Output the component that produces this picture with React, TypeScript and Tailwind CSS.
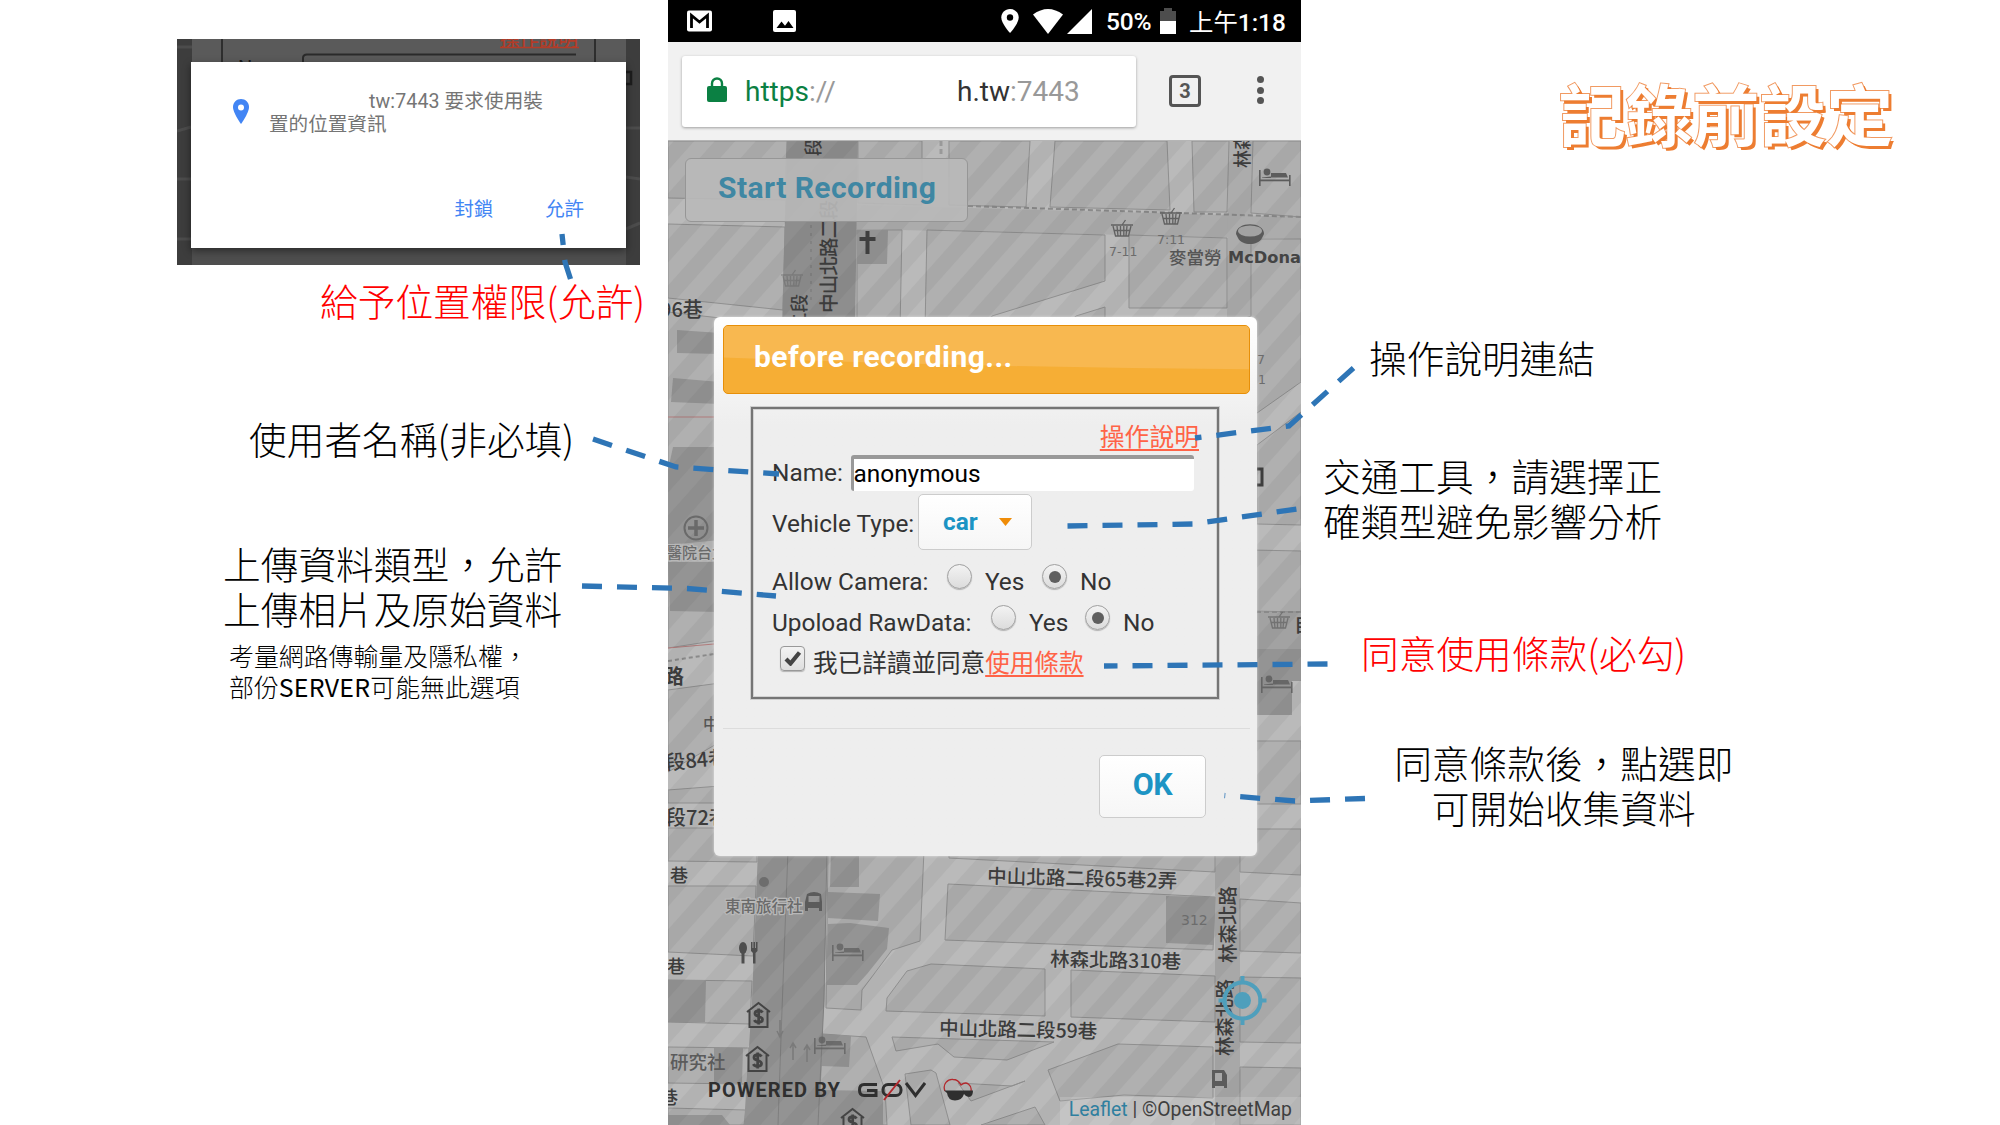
import React from 'react';

const CJK = "font-['Noto_Sans_CJK_TC',sans-serif]";

/* ---------- small map glyphs ---------- */

function Basket({ x, y, o = 1 }: { x: number; y: number; o?: number }) {
  return (
    <g transform={`translate(${x} ${y})`} opacity={o} fill="none" stroke="#616161" strokeWidth="1.3">
      <path d="M0 5H22M2 6L4.5 16H17.5L20 6M6 6l1 10M9.5 6v10M12.8 6v10M16 6l-1 10M3 10.5H19M11 5L14.5 0" />
    </g>
  );
}

function Bed({ x, y, o = 1 }: { x: number; y: number; o?: number }) {
  return (
    <g transform={`translate(${x} ${y})`} opacity={o} fill="#5c5c5c">
      <rect x="0" y="2" width="1.6" height="16" />
      <rect x="30" y="7" width="1.6" height="11" />
      <rect x="0" y="11.5" width="31" height="1.8" />
      <circle cx="8" cy="4" r="3.4" />
      <path d="M12 5h15l2 4.5H12z" />
      <path d="M3 9.5l9-1v1.5H3z" />
    </g>
  );
}

function Bank({ x, y }: { x: number; y: number }) {
  return (
    <g transform={`translate(${x} ${y})`} fill="none" stroke="#444" strokeWidth="2">
      <path d="M0 10L11.5 1L23 10M2.5 9V25H20.500V9" />
      <path d="M15.500 10.500C14 8 8 8 8 11.500C8 15.500 15.500 13.500 15.500 17.500C15.500 21 8.500 21 7.500 18M11.700 6.500V22.500" strokeWidth="2.800" />
    </g>
  );
}

function MapCanvas() {
  const blocks = [
    '668,141 787,141 785,200 668,198',
    '858,141 922,141 922,205 858,203',
    '949,141 1030,141 1026,207 949,205',
    '1055,141 1167,141 1170,210 1050,207',
    '1192,141 1229,141 1227,212 1194,212',
    '1253,141 1301,141 1301,217 1251,213',
    '668,224 785,227 783,310 668,298',
    '857,230 902,230 900,330 857,330',
    '927,230 1105,235 1105,281 992,316 985,330 925,330',
    '1105,307 1105,330 1060,330 1076,316',
    '1129,235 1227,238 1227,308 1129,308',
    '1251,239 1301,239 1301,382 1240,425 1240,320 1251,316',
    '668,312 720,318 720,640 668,648',
    '1257,445 1301,412 1301,525 1257,524',
    '1250,550 1301,551 1301,612 1250,611',
    '668,690 720,683 720,742 668,772',
    '668,790 720,786 720,803 668,803',
    '668,828 757,828 757,862 668,861',
    '1250,741 1301,741 1301,804 1250,804',
    '1250,829 1301,829 1301,875 1240,872 1240,829',
    '668,886 756,886 753,956 668,952',
    '668,980 752,981 750,1024 668,1022',
    '668,1047 749,1048 747,1084 668,1083',
    '668,1108 746,1110 744,1125 668,1125',
    '828,850 924,850 920,941 892,950 862,990 861,1010 826,1008',
    '949,850 1215,850 1215,872 949,858',
    '948,884 1215,897 1213,950 945,940',
    '931,964 1045,969 1045,1016 886,1011 887,998 907,971',
    '1071,970 1215,976 1215,1022 1071,1017',
    '892,1037 1054,1042 1007,1060 954,1057 938,1044 896,1051',
    '905,1074 931,1070 936,1073 950,1125 911,1125',
    '823,1034 866,1037 885,1090 887,1125 818,1125',
    '1048,1070 1118,1044 1213,1047 1213,1098 1124,1095 1060,1101',
    '958,1083 1012,1086 1025,1081 971,1101',
    '981,1125 1035,1107 1045,1125',
    '1240,899 1301,903 1301,953 1240,951',
    '1240,977 1301,978 1301,1043 1240,1042',
    '1240,1067 1301,1068 1301,1125 1240,1125',
  ];
  const dark = [
    '857,230 888,230 887,264 857,264',
    '677,330 720,333 720,354 677,353',
    '673,378 720,382 720,404 671,402',
    '673,447 720,447 720,540 668,545 668,470',
    '668,562 720,562 720,612 670,611',
    '831,850 859,850 859,887 830,887',
    '828,892 880,894 878,921 828,918',
    '828,924 850,923 889,928 887,949 867,974 857,985 826,985',
    '1166,896 1215,897 1214,945 1166,943',
    '668,980 706,980 705,1022 668,1022',
    '714,1048 743,1048 742,1083 714,1083',
    '823,1034 851,1036 849,1067 821,1066',
    '817,1090 883,1091 883,1125 817,1125',
    '668,1115 722,1115 730,1125 668,1125',
    '1250,649 1301,649 1301,681 1292,681 1292,715 1250,715',
  ];
  const label = { fontFamily: "'Noto Sans CJK TC', sans-serif", fill: '#3c3c3c', fontWeight: 500 } as const;
  const halo = { paintOrder: 'stroke', stroke: '#b8b8b8', strokeWidth: 2.5 } as const;
  return (
    <svg className="absolute inset-0 h-[984px] w-[633px]" viewBox="668 141 633 984">
      <defs>
        <pattern id="stripe" width="41" height="46" patternUnits="userSpaceOnUse">
          <path d="M0 46L41 0H20.500L0 23zM20.500 46H41V23z" fill="#000" fillOpacity=".045" />
        </pattern>
      </defs>
      <rect x="668" y="141" width="633" height="984" fill="#bababa" />
      <polygon points="857,205 1301,217 1301,239 857,229" fill="#acacac" />
      <polygon points="1228,141 1253,141 1251,330 1227,330" fill="#acacac" />
      <rect x="1250" y="612" width="51" height="37" fill="#a2a2a2" />
      <rect x="1215" y="850" width="25" height="275" fill="#a8a8a8" />
      <g fill="#b0b0b0" stroke="#8f8f8f" strokeWidth="1">
        {blocks.map((p) => (
          <polygon key={p} points={p} />
        ))}
      </g>
      <g fill="#949494">
        {dark.map((p) => (
          <polygon key={p} points={p} />
        ))}
      </g>
      <polygon points="787,141 858,141 855,330 782,330" fill="#8e8e8e" />
      <polygon points="758,850 827,850 824,1000 818,1125 744,1125 752,1000" fill="#939393" />
      <path d="M788 850L782 1010L778 1125M827 850L824 1000L818 1125" fill="none" stroke="#7f7f7f" />
      <path d="M811 225V300" stroke="#777" strokeDasharray="3 5" />
      <path d="M968 206L1301 217" stroke="#8a8a8a" strokeWidth="2" strokeDasharray="5 3" />
      <path d="M941 141v16" stroke="#999" strokeWidth="3" strokeDasharray="5 3" />
      <path d="M668 417H714M668 648L714 644" stroke="#b07a7a" />
      <path d="M668 661L714 654" stroke="#8a8a8a" strokeWidth="2" strokeDasharray="4 3" />
      <path d="M1240 612H1301" stroke="#8a8a8a" strokeWidth="2" strokeDasharray="5 3" />
      <rect x="668" y="141" width="633" height="984" fill="url(#stripe)" />

      <Basket x={1111} y={220} />
      <Basket x={1160} y={208} />
      <Basket x={781} y={270} o={0.45} />
      <Basket x={1268} y={612} o={0.7} />
      <Bed x={1259} y={168} />
      <Bed x={1261} y={675} o={0.8} />
      <Bed x={832} y={943} o={0.7} />
      <Bed x={814} y={1036} o={0.7} />
      <path d="M865.500 231h4v6h6v4h-6v13h-4v-13h-6v-4h6z" fill="#3f3f3f" />
      <path d="M1236 234c0-13 28-13 28 0l-2 4c-4 8-20 8-24 0z" fill="#5a5a5a" />
      <ellipse cx="1250" cy="231" rx="12" ry="5.500" fill="#a2a2a2" />
      <g fill="none" stroke="#6a6a6a" strokeWidth="2">
        <circle cx="696" cy="528" r="11.500" />
        <path d="M696 520v16M688 528h16" strokeWidth="3.500" />
      </g>
      <Bank x={747} y={1002} />
      <Bank x={746} y={1046} />
      <Bank x={841} y={1108} />
      <circle cx="764" cy="882" r="5" fill="#6d6d6d" />
      <g fill="#4e4e4e">
        <ellipse cx="743" cy="948" rx="4" ry="6" />
        <rect x="741.500" y="948" width="3" height="15.500" />
        <path d="M751 942h1.500v6h1v-6h1.500v6h1v-6h1.500v9l-2 2v10.500h-2.500V953l-2-2z" />
      </g>
      <g fill="none" stroke="#7a7a7a" strokeWidth="1.500">
        <path d="M793 1060v-16m-3 4l3-5l3 5M807 1062v-16m-3 4l3-5l3 5M780 1020v16m-3-5l3 6l3-6" />
      </g>
      <g fill="#5b5b5b">
        <path d="M807 894q7-4 14 0l1 8v9h-3v-3h-11v3h-3v-9zM808.500 896v6h11v-6z" fillRule="evenodd" />
        <path d="M1212 1070h12l3 5v13h-3v-2h-9v2h-3zM1215 1073v8h7v-8z" fillRule="evenodd" />
      </g>
      <path d="M1257 469h5v16h-5" fill="none" stroke="#3d3d3d" strokeWidth="3" />

      <g style={label} fontSize="19.500">
        <g fontSize="20">
          <text x="660" y="317">96巷</text>
          <text x="664" y="684" fontWeight="700">路</text>
          <text x="703" y="730" fontSize="16" fill="#555">中</text>
          <text transform="translate(666 770) rotate(-5)">段84巷</text>
          <text x="666" y="825">段72巷</text>
        </g>
        <text transform="translate(987 883) rotate(1.500)" textLength="190" style={halo}>中山北路二段65巷2弄</text>
        <text transform="translate(1050 966) rotate(1.200)" textLength="131" style={halo}>林森北路310巷</text>
        <text transform="translate(939 1035) rotate(1.200)" textLength="158" style={halo}>中山北路二段59巷</text>
        <text transform="translate(1235 963) rotate(-90)" textLength="77">林森北路</text>
        <text transform="translate(1232 1056) rotate(-90)" textLength="77">林森北路</text>
        <text transform="translate(836 313) rotate(-90)" textLength="113">中山北路二段</text>
        <text transform="translate(820 156) rotate(-90)" fontSize="18">段</text>
        <text transform="translate(806 331) rotate(-90)" fontSize="18.500">二段</text>
        <text transform="translate(1249 168) rotate(-90)" fontSize="18">林森</text>
        <text x="670" y="882" fontSize="18">巷</text>
        <text x="667" y="973" fontSize="18">巷</text>
        <text x="660" y="1104" fontSize="18">巷</text>
        <text x="670" y="1069" fontSize="18.500" fill="#5b5b5b">研究社</text>
        <text x="725" y="912" fontSize="15.500" fill="#6a6a6a" style={halo}>東南旅行社</text>
        <text x="667" y="558" fontSize="15" fill="#6a6a6a" style={halo}>醫院台北</text>
        <text x="1169" y="264" fontSize="17.500" fill="#555">麥當勞</text>
        <text x="1294" y="632" fontSize="20">自</text>
      </g>
      <g fontFamily="DejaVu Sans, sans-serif" fill="#6c6c6c" fontSize="12.500">
        <text x="1109" y="256">7-11</text>
        <text x="1157" y="244">7:11</text>
        <text x="1257" y="364">7</text>
        <text x="1258" y="384">1</text>
        <text x="1181" y="925" fontSize="14">312</text>
        <text x="1228" y="263" fontSize="16.500" fontWeight="700" fill="#444" textLength="73" lengthAdjust="spacingAndGlyphs">McDona</text>
      </g>
      <g stroke="#4f9fbc" fill="none" strokeWidth="4">
        <circle cx="1242.500" cy="1000.500" r="18" />
        <circle cx="1242.500" cy="1000.500" r="8.500" fill="#4f9fbc" stroke="none" />
        <path d="M1242.500 976v8M1242.500 1017v8M1218.500 1000.500h8M1258.500 1000.500h8" />
      </g>
    </svg>
  );
}

/* ---------- phone ---------- */

function StatusBar() {
  return (
    <div className="flex h-[42px] items-center bg-black pl-[19px] font-['Roboto','Noto_Sans_CJK_TC',sans-serif] text-white">
      <svg className="h-[22px] w-[25px]" viewBox="0 0 25 22">
        <rect width="25" height="21" y=".5" rx="2" fill="#fff" />
        <path d="M4.500 18V5.500l8 6.500l8-6.500V18" fill="none" stroke="#000" strokeWidth="2.800" />
      </svg>
      <svg className="ml-[61px] h-[22px] w-[23px]" viewBox="0 0 23 22">
        <rect width="23" height="22" rx="2" fill="#fff" />
        <path d="M3.500 18l5-6.500l3.500 4.300l3.500-4.800l5 7z" fill="#000" />
      </svg>
      <svg className="ml-[205px] h-[24px] w-[18px]" viewBox="0 0 18 24">
        <path d="M9 0C4 0 .3 3.800.3 8.500C.3 14.500 9 24 9 24s8.700-9.500 8.700-15.500C17.700 3.800 14 0 9 0z" fill="#fff" />
        <circle cx="9" cy="8.500" r="3.200" fill="#000" />
      </svg>
      <svg className="ml-[14px] h-[25px] w-[30px]" viewBox="0 0 30 25">
        <path d="M0 5.500Q15-5.500 30 5.500L15 25z" fill="#fff" />
      </svg>
      <svg className="ml-[4px] h-[25px] w-[25px]" viewBox="0 0 25 25">
        <path d="M25 0V25H0z" fill="#fff" />
      </svg>
      <span className="mt-[1px] ml-[14px] w-[46px] text-[24.500px] leading-[42px] font-medium tracking-[-0.200px]">50%</span>
      <svg className="ml-[8px] h-[26px] w-[16px]" viewBox="0 0 16 26">
        <path d="M4 0h8v3h4v11H0V3h4z" fill="#4d4d4d" />
        <path d="M0 13h16v13H0z" fill="#fff" />
      </svg>
      <span className="mt-[1px] ml-[13px] whitespace-nowrap text-[24.400px] leading-[42px] font-medium">
        <span className="font-['Noto_Sans_CJK_TC'] font-normal">上午</span>1:18
      </span>
    </div>
  );
}

function Toolbar() {
  return (
    <div className="relative flex h-[99px] border-b border-[#b5b5b5] bg-[#f1f1f1] pt-[14px] pl-[14px] font-['Roboto',sans-serif]">
      <div className="flex h-[71px] w-[454px] rounded-[3px] bg-white pl-[25px] text-[28px] leading-[71px] shadow-[0_1px_3px_rgba(0,0,0,0.35)]">
        <svg className="mt-[21px] h-[25px] w-[20px]" viewBox="0 0 20 25">
          <rect y="9" width="20" height="16" rx="2" fill="#0b8043" />
          <path d="M5 10V6.500a5 5 0 0 1 10 0V10" fill="none" stroke="#0b8043" strokeWidth="2.400" />
        </svg>
        <span className="ml-[18px] w-[212px] text-[#999]">
          <span className="text-[#0b8043]">https</span>://
        </span>
        <span className="text-[#999]">
          <span className="text-[#333]">h.tw</span>:7443
        </span>
      </div>
      <div className="mt-[19px] ml-[33px] flex h-[32px] w-[32px] items-center justify-center rounded-[4px] border-[3px] border-[#555] text-[20px] font-bold text-[#555]">
        3
      </div>
      <div className="mt-[20px] ml-[56px] flex flex-col gap-[3.500px]">
        <i className="size-[7px] rounded-full bg-[#555]" />
        <i className="size-[7px] rounded-full bg-[#555]" />
        <i className="size-[7px] rounded-full bg-[#555]" />
      </div>
    </div>
  );
}

function Radio({ on = false }: { on?: boolean }) {
  return (
    <span className="-mt-[11px] flex size-[25px] shrink-0 items-center justify-center rounded-full border-[1.500px] border-[#a0a0a0] bg-gradient-to-b from-[#f3f3f3] to-[#dcdcdc] shadow-[0_1px_1px_rgba(0,0,0,0.25)]">
      {on && <i className="size-[12px] rounded-full bg-[#5f5f5f]" />}
    </span>
  );
}

function Dialog() {
  return (
    <div className="relative h-[539px] w-[543px] rounded-[6px] bg-[#eeeeee] bg-gradient-to-b from-white via-[#eeeeee] via-20% to-[#eeeeee] pt-[8px] font-['Roboto','Noto_Sans_CJK_TC',sans-serif] text-[24.400px] text-[#333] shadow-[0_0_3px_rgba(255,255,255,0.6)]">
      <div className="relative ml-[9px] h-[69px] w-[527px] overflow-hidden rounded-[5px] border-[1.500px] border-[#e78f08] bg-[#f6ae35]">
        <svg className="absolute inset-0 h-full w-full" viewBox="0 0 527 68" preserveAspectRatio="none">
          <path d="M0 0H527V44Q260 42 0 32z" fill="#f8b850" />
        </svg>
        <div className="relative pl-[30px] text-[30px] leading-[62px] font-bold tracking-[0.450px] text-white">before recording...</div>
      </div>

      <div className="mt-[13px] ml-[37px] h-[292px] w-[468px] border-2 border-[#757575] pl-[19px] shadow-[inset_0_0_0_1px_#d2d2d2,0_0_0_1px_#cfcfcf]">
        <div className="mt-[13px] mr-[18px] text-right text-[24.800px] leading-[32px]">
          <a className="text-[#ff6347] underline decoration-[1.500px] underline-offset-[3px]">操作說明</a>
        </div>
        <div className="mt-px flex h-[36px] leading-[36px]">
          <span className="w-[78.500px]">Name:</span>
          <div className="h-[36px] w-[343px] rounded-[3px] border-t-4 border-l-[3px] border-t-[#999] border-l-[#999] bg-white leading-[29px] text-black">
            anonymous
          </div>
        </div>
        <div className="mt-[3px] flex h-[56px]">
          <span className="w-[146px] whitespace-nowrap leading-[60px]">Vehicle Type:</span>
          <button className="flex h-[56px] w-[114px] items-center rounded-[5px] border-[1.500px] border-[#ccc] bg-gradient-to-b from-white to-[#f6f6f6] pb-[2px] pl-[24px] font-bold text-[#1c94c4]">
            car
            <svg className="mt-[2px] ml-auto mr-[19px] h-[8px] w-[13px]" viewBox="0 0 13 8">
              <path d="M0 0h13L6.500 8z" fill="#ef8c08" />
            </svg>
          </button>
        </div>
        <div className="mt-[16px] flex h-[32px] items-center whitespace-nowrap leading-[32px]">
          <span className="w-[175px]">Allow Camera:</span>
          <Radio />
          <span className="ml-[13px] w-[57px]">Yes</span>
          <Radio on />
          <span className="ml-[13px]">No</span>
        </div>
        <div className="mt-[9px] flex h-[32px] items-center whitespace-nowrap leading-[32px]">
          <span className="w-[219px]">Upoload RawData:</span>
          <Radio />
          <span className="ml-[13px] w-[56px]">Yes</span>
          <Radio on />
          <span className="ml-[13px]">No</span>
        </div>
        <div className="mt-[9px] flex h-[32px] items-center whitespace-nowrap text-[24.600px] leading-[32px]">
          <span className="-mt-[12px] ml-[8px] flex size-[25px] items-center justify-center rounded-[4px] border border-[#999] bg-gradient-to-b from-[#f3f3f3] to-[#dedede] shadow-[0_1px_1px_rgba(0,0,0,0.25)]">
            <svg className="h-[16px] w-[18px]" viewBox="0 0 18 16">
              <path d="M2 9l4.500 4.500L15.500 2.500" fill="none" stroke="#444" strokeWidth="4.200" />
            </svg>
          </span>
          <span className="ml-[8px]">
            我已詳讀並同意
            <a className="text-[#ff6347] underline decoration-[1.500px] underline-offset-[3px]">使用條款</a>
          </span>
        </div>
      </div>

      <div className="mt-[29px] ml-[9px] flex w-[527px] justify-end border-t-[1.500px] border-[#dcdcdc] pt-[26px] pr-[44px]">
        <button className="h-[63px] w-[107px] rounded-[5px] border-[1.500px] border-[#ccc] bg-gradient-to-b from-white to-[#f6f6f6] pb-[5px] text-[30.500px] font-bold tracking-[-0.500px] text-[#1c94c4]">
          OK
        </button>
      </div>
    </div>
  );
}

function Phone() {
  return (
    <section className="flex w-[633px] shrink-0 flex-col overflow-hidden">
      <StatusBar />
      <Toolbar />
      <div className="relative flex-1 overflow-hidden font-['Roboto',sans-serif]">
        <MapCanvas />
        <div className="relative mt-[17px] ml-[17px] h-[64px] w-[283px] rounded-[6px] border-[1.500px] border-[#969696] bg-[#b9b9b9]/90 pl-[32px] text-[30px] leading-[58px] font-bold tracking-[0.450px] text-[#3f87a3]">
          Start Recording
        </div>
        <div className="mt-[95px] ml-[46px]">
          <Dialog />
        </div>
        <div className="relative mt-[220px] ml-[40px] flex h-[28px] items-center whitespace-nowrap text-[20px] font-bold text-[#2f2f2f]">
          <span className="w-[150px] tracking-[1.100px]">POWERED BY</span>
          <svg className="h-[24px] w-[68px]" viewBox="0 0 68 24">
            <g fill="none" stroke="#2f2f2f" strokeWidth="3">
              <path d="M19 6.500H6Q1.500 6.500 1.500 12T6 17.500H18V12.500H9" />
              <rect x="25" y="6.500" width="18" height="11" rx="5" />
              <path d="M48 5L57.500 17.500L67 5" />
            </g>
            <path d="M26 22L42 2" stroke="#b3282d" strokeWidth="2" />
          </svg>
          <svg className="ml-[17px] h-[24px] w-[31px]" viewBox="0 0 31 24">
            <path d="M2 13C-1 6 5 1 10 1.500C15 1.500 17 5 18 7C24 2 29 8 28 13" fill="none" stroke="#b3282d" strokeWidth="1.300" />
            <path d="M1 12.500H30Q30 19 26 19Q23 19 21 16Q19 22.500 12 22.500Q5 22.500 4 15z" fill="#2f2f2f" />
          </svg>
        </div>
        <div className="absolute right-0 bottom-0 h-[28px] bg-white/15 pr-[9px] pl-[9px] text-[19.400px] leading-[25px] whitespace-nowrap text-[#3f3f3f]">
          <span className="text-[#2f7f9f]">Leaflet</span> | ©OpenStreetMap
        </div>
      </div>
    </section>
  );
}

/* ---------- permission prompt ---------- */

function PermissionShot() {
  return (
    <div className="relative ml-[177px] h-[226px] w-[463px] overflow-hidden bg-[#3d3d3d] font-['Roboto','Noto_Sans_CJK_TC',sans-serif]">
      <svg className="absolute inset-0 h-full w-full" viewBox="0 0 463 226">
        <path d="M0 8h15M0 92l14-4M0 140h15M449 89h14M449 138l14 2M449 190l14-6M0 200h15" stroke="#4c4c4c" strokeWidth="3" />
        <rect x="15" width="434" height="226" fill="#5a5a5a" />
        <rect x="15" y="209" width="434" height="17" fill="#4e4e4e" />
        <path d="M45 0V24M418 0V24" stroke="#2e2e2e" strokeWidth="2" />
        <path d="M126 24V19Q126 15.500 130 15.500H399" fill="none" stroke="#2a2a2a" strokeWidth="2" />
        <path d="M449 33h5v12h-5" fill="none" stroke="#1d1d1d" strokeWidth="2.500" />
        <text x="323" y="7" fontSize="19.500" fontWeight="500" fill="#b23c28">操作說明</text>
        <path d="M323 8.500h79" stroke="#b23c28" strokeWidth="1.500" />
        <text x="61" y="36" fontSize="20" fill="#181818">Name:</text>
      </svg>
      <div className="relative mt-[23px] ml-[14px] flex h-[186px] w-[435px] flex-col bg-white shadow-[0_3px_8px_rgba(0,0,0,0.45)]">
        <div className="flex pt-[25px] pl-[42px]">
          <svg className="mt-[12px] h-[25px] w-[16px]" viewBox="0 0 16 25">
            <path d="M8 0C3.500 0 0 3.500 0 8c0 6 8 17 8 17s8-11 8-17c0-4.500-3.500-8-8-8z" fill="#4285f4" />
            <circle cx="8" cy="8.500" r="3" fill="#fff" />
          </svg>
          <div className="ml-[20px] text-[19.600px] leading-[23px] whitespace-nowrap text-[#757575]">
            <div className="pt-[3px] pl-[100px] tracking-[0.100px]">tw:7443 要求使用裝</div>
            <div>置的位置資訊</div>
          </div>
        </div>
        <div className="mt-auto mb-[24px] flex justify-end gap-[52px] pr-[42px] text-[19.400px] leading-[28px] text-[#4285f4]">
          <span>封鎖</span>
          <span>允許</span>
        </div>
      </div>
    </div>
  );
}

/* ---------- dashed connectors ---------- */

function Connectors() {
  return (
    <svg className="pointer-events-none absolute inset-0 h-[1125px] w-[2000px]" viewBox="0 0 2000 1125">
      <g fill="none" stroke="#2e75b6" strokeWidth="5.300" strokeDasharray="20 15">
        <path d="M570.500 279L565 262L562 234" />
        <path d="M593 439L676 467L779 474" />
        <path d="M582 586L687 588.500L776 596" />
        <path d="M1353.500 368L1289 426L1195 438" />
        <path d="M1067.500 526L1193 524L1297 509" />
        <path d="M1327.500 664L1104 666" />
        <path d="M1365 798.500L1295 801L1224.500 795.500" />
      </g>
    </svg>
  );
}

export default function App() {
  return (
    <main
      lang="zh-Hant-TW"
      className={`relative flex h-[1125px] w-[2000px] overflow-hidden bg-white text-[37.700px] leading-[45px] font-light text-black ${CJK}`}
    >
      <aside className="w-[668px] shrink-0 pt-[39px] whitespace-nowrap">
        <div className="font-normal">
          <PermissionShot />
        </div>
        <p className="mt-[12px] ml-[320px] text-[#ff0000]">給予位置權限(允許)</p>
        <p className="mt-[93px] ml-[249px]">使用者名稱(非必填)</p>
        <p className="mt-[80px] ml-[223px]">
          上傳資料類型，允許
          <br />
          上傳相片及原始資料
        </p>
        <p className="mt-[10px] ml-[229px] text-[24.900px] leading-[31px]">
          考量網路傳輸量及隱私權，
          <br />
          部份<span className="font-normal tracking-[0.200px]">SERVER</span>可能無此選項
        </p>
      </aside>

      <div className="flex font-normal">
        <Phone />
      </div>

      <aside className="flex-1 pt-[72px] whitespace-nowrap">
        <h1 className="ml-[258px] text-[66.800px] leading-[80px] font-bold text-white [-webkit-text-stroke:2px_#f19a62] [paint-order:stroke_fill] [text-shadow:3px_3px_0_#ed7d31]">
          記錄前設定
        </h1>
        <p className="mt-[182px] ml-[68px]">操作說明連結</p>
        <p className="mt-[73px] ml-[22px]">
          交通工具，請選擇正
          <br />
          確類型避免影響分析
        </p>
        <p className="mt-[87px] ml-[60px] text-[#ff0000]">同意使用條款(必勾)</p>
        <p className="mt-[65px] ml-[93px] w-[339.500px] text-center">
          同意條款後，點選即
          <br />
          可開始收集資料
        </p>
      </aside>

      <Connectors />
    </main>
  );
}
